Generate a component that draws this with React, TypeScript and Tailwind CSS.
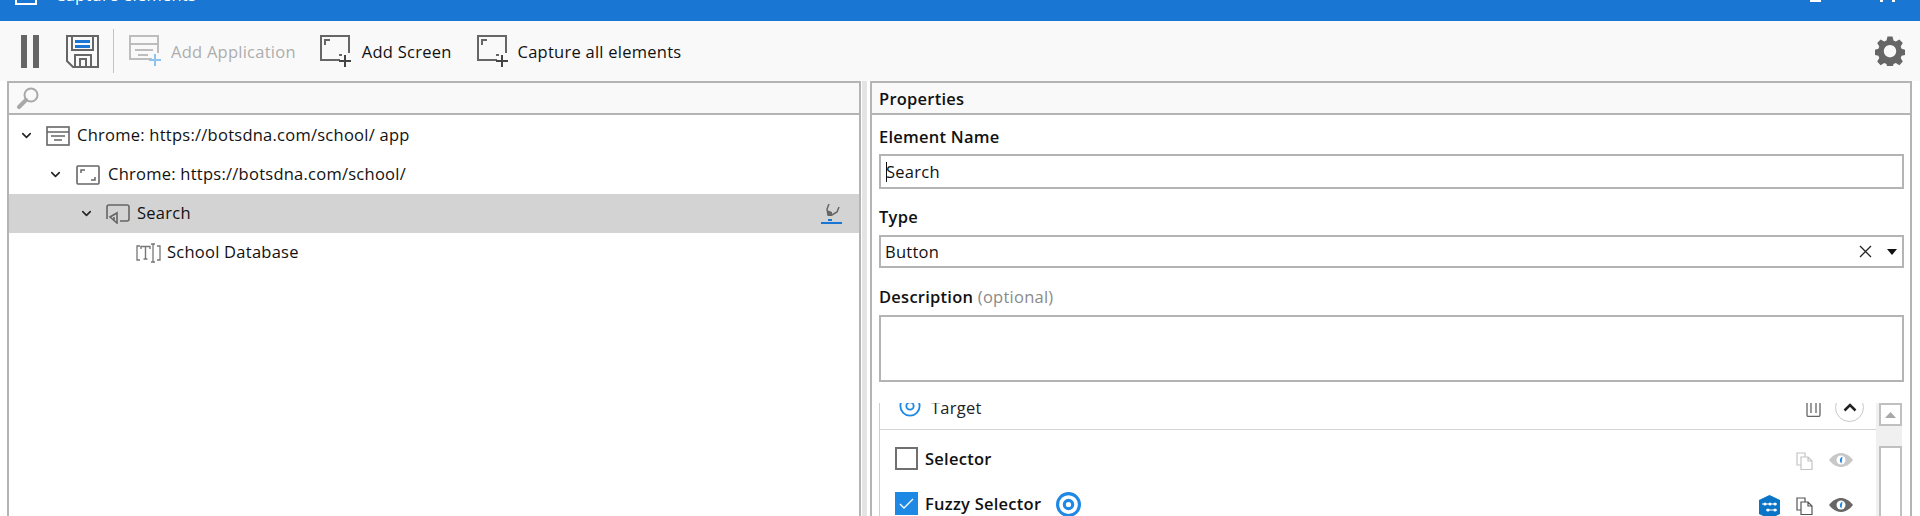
import { ChevronDown } from 'lucide-react'
import type { ReactNode } from 'react'

const font = "font-['Open_Sans','Noto_Sans',sans-serif] tracking-[0.25px]"

function PauseIcon() {
    return (
        <svg width="18" height="33" viewBox="0 0 18 33" className="ml-[21px] shrink-0">
            <rect x="0" y="0" width="6" height="33" fill="#666" />
            <rect x="12" y="0" width="6" height="33" fill="#666" />
        </svg>
    )
}

function SaveIcon() {
    return (
        <svg width="33" height="33" viewBox="0 0 33 33" className="ml-[27px] shrink-0" fill="none">
            <path d="M1 1h31v31H7l-6-6z" stroke="#666" strokeWidth="2" />
            <path d="M6 2v13h21V2" stroke="#666" strokeWidth="2" />
            <rect x="9" y="5" width="15" height="3" fill="#1976d2" />
            <rect x="9" y="10" width="15" height="3" fill="#1976d2" />
            <path d="M9 32V20h16v12M14 32v-8h6v8" stroke="#666" strokeWidth="2" />
        </svg>
    )
}

function AddAppIcon() {
    return (
        <svg width="32" height="33" viewBox="0 0 32 33" className="shrink-0" fill="none">
            <path d="M23 24H1V1h28v17" stroke="#bdbdbd" strokeWidth="2" />
            <path d="M1 9h28M6 15h18M9 20h10" stroke="#bdbdbd" strokeWidth="2" />
            <path d="M26 19v12M20 25h12" stroke="#90c2ef" strokeWidth="2" />
        </svg>
    )
}

function ScreenAddIcon() {
    return (
        <svg width="32" height="33" viewBox="0 0 32 33" className="shrink-0" fill="none">
            <path d="M20 25H1V1h28v17" stroke="#666" strokeWidth="2" />
            <path d="M5 10V5h5M19 20h3" stroke="#666" strokeWidth="2" />
            <path d="M25 20v12M19 26h12" stroke="#444" strokeWidth="2" />
        </svg>
    )
}

function GearIcon() {
    return (
        <svg width="30" height="30" viewBox="0 0 30 30" className="shrink-0">
            <path
                fill="#666"
                fillRule="evenodd"
                d="M12.5 0.5h5l1 4 2.3 1 3.6-2.1 3.4 3.6-2.1 3.5 0.9 2.3 4 1v5l-4 1-0.9 2.3 2.1 3.5-3.4 3.6-3.6-2.1-2.3 1-1 4h-5l-1-4-2.3-1-3.6 2.1-3.4-3.6 2.1-3.5-0.9-2.3-4-1v-5l4-1 0.9-2.3-2.1-3.5 3.4-3.6 3.6 2.1 2.3-1z M15 9a6.2 6.2 0 1 0 0.01 0z"
            />
        </svg>
    )
}

function SearchIcon() {
    return (
        <svg width="24" height="24" viewBox="0 0 24 24" fill="none" className="ml-[7px] shrink-0">
            <circle cx="15" cy="9" r="6.5" stroke="#a8a8a8" strokeWidth="2" />
            <path d="M10 14l-7 7" stroke="#a8a8a8" strokeWidth="4" strokeLinecap="round" />
        </svg>
    )
}

function AppNodeIcon() {
    return (
        <svg width="24" height="20" viewBox="0 0 24 20" fill="none" className="shrink-0">
            <rect x="1" y="1" width="22" height="18" stroke="#666" strokeWidth="1.6" />
            <path d="M1 6h22M5 10h14M8 14h8" stroke="#666" strokeWidth="1.5" />
        </svg>
    )
}

function ScreenNodeIcon() {
    return (
        <svg width="24" height="20" viewBox="0 0 24 20" fill="none" className="shrink-0">
            <rect x="1" y="1" width="22" height="18" rx="1" stroke="#666" strokeWidth="1.6" />
            <path d="M5 8V5h4M19 12v3h-4" stroke="#666" strokeWidth="1.5" />
        </svg>
    )
}

function ElementNodeIcon() {
    return (
        <svg width="24" height="20" viewBox="0 0 24 20" fill="none" className="shrink-0">
            <path d="M1 15V3a2 2 0 0 1 2-2h18a2 2 0 0 1 2 2v12a2 2 0 0 1-2 2h-7" stroke="#666" strokeWidth="1.6" />
            <path d="M11 9v10l-7-6z" stroke="#666" strokeWidth="1.6" />
            <path d="M8 13v3" stroke="#666" strokeWidth="1.6" />
        </svg>
    )
}

function TextNodeIcon() {
    return (
        <svg width="25" height="20" viewBox="0 0 25 20" fill="none" className="shrink-0">
            <path d="M4 3H1v14h3M21 3h3v14h-3" stroke="#777" strokeWidth="1.3" />
            <path d="M5 6V3.5h9V6M9.5 3.5V16M7.5 16h4" stroke="#777" strokeWidth="1.4" />
            <path d="M15 1h4M15 19h4M17 1v18" stroke="#777" strokeWidth="1.3" />
        </svg>
    )
}

function BrushIcon() {
    return (
        <svg width="21" height="20" viewBox="0 0 21 20" fill="none" className="shrink-0">
            <path d="M8 0L6 5l1 6h4l5-3 2-5" stroke="#666" strokeWidth="1.5" />
            <path d="M6 6l5 2 0 4H7z" fill="#666" />
            <rect x="7" y="15" width="4" height="2" fill="#1976d2" />
            <rect x="0" y="18" width="21" height="2" fill="#1976d2" />
        </svg>
    )
}

function TargetIcon({ size, stroke }: { size: number; stroke: number }) {
    return (
        <svg width={size} height={size} viewBox="0 0 24 24" fill="none" className="shrink-0">
            <circle cx="12" cy="12" r="10.5" stroke="#1e88e5" strokeWidth={stroke} />
            <circle cx="12" cy="12" r="4" stroke="#1e88e5" strokeWidth={stroke} />
        </svg>
    )
}

function CopyIcon({ color }: { color: string }) {
    return (
        <svg width="17" height="18" viewBox="0 0 17 18" fill="none" className="shrink-0">
            <path d="M5 13H1V1h8v4" stroke={color} strokeWidth="1.2" />
            <path d="M5 5h7l4 4v8.5H5zM12 5v4h4" stroke={color} strokeWidth="1.2" fill="none" />
        </svg>
    )
}

function EyeIcon({ color }: { color: string }) {
    return (
        <svg width="24" height="14" viewBox="0 0 24 14" className="shrink-0">
            <path d="M0 7C4 2 8 0 12 0s8 2 12 7c-4 5-8 7-12 7S4 12 0 7z" fill={color} />
            <circle cx="12" cy="7" r="4.5" fill="#fff" />
            <path d="M13.5 3.5a4 4 0 0 0-1 7z" fill="#1e88e5" />
        </svg>
    )
}

function HexIcon() {
    return (
        <svg width="21" height="24" viewBox="0 0 21 24" className="shrink-0">
            <path d="M10.5 0L21 5v14l-10.500 5L0 19V5z" fill="#0a74c6" />
            <path d="M3 9h15M7 15h11" stroke="#fff" strokeWidth="1.2" />
            <circle cx="6" cy="9" r="1.5" fill="#fff" />
            <circle cx="11" cy="9" r="1.5" fill="#fff" />
            <circle cx="16" cy="9" r="1.5" fill="#fff" />
            <circle cx="9" cy="15" r="1.5" fill="#fff" />
            <circle cx="16" cy="15" r="1.5" fill="#fff" />
        </svg>
    )
}

function TreeRow({ className, children }: { className: string; children: ReactNode }) {
    return <div className={`flex h-[39px] items-center text-[16.5px] text-[#111] ${className}`}>{children}</div>
}

function FieldLabel({ className, children }: { className: string; children: ReactNode }) {
    return <div className={`h-[23px] text-[16.5px] leading-[23px] font-semibold text-[#111] ${className}`}>{children}</div>
}

export default function App() {
    return (
        <div className={`h-[516px] w-[1920px] overflow-hidden bg-white ${font}`}>
            {/* title bar, cut off at the top of the capture */}
            <div className="flex h-[21px] items-start overflow-hidden bg-[#1976d2] text-white">
                <div className="-mt-[10px] ml-[15px] h-[15px] w-[22px] shrink-0 border-x-2 border-b-2 border-white" />
                <span className="-mt-[15px] ml-[18px] text-[16.5px] leading-[20px]">Capture elements</span>
                <div className="ml-auto h-[2px] w-[11px] bg-white" />
                <div className="mr-[25px] ml-[59px] flex h-[2px] w-[15px] justify-between">
                    <span className="h-[2px] w-[3px] bg-white" />
                    <span className="h-[2px] w-[3px] bg-white" />
                </div>
            </div>

            {/* toolbar */}
            <div className="flex h-[60px] items-center bg-[#f9f9f9]">
                <PauseIcon />
                <SaveIcon />
                <div className="ml-[14px] h-[44px] w-[1px] bg-[#c4c4c4]" />
                <div className="ml-[15px] flex items-center gap-[10px]">
                    <AddAppIcon />
                    <span className="mt-[2px] text-[16.5px] text-[#adadad]">Add Application</span>
                </div>
                <div className="ml-[24px] flex items-center gap-[10px]">
                    <ScreenAddIcon />
                    <span className="mt-[2px] text-[16.5px] text-[#111]">Add Screen</span>
                </div>
                <div className="ml-[25px] flex items-center gap-[9px]">
                    <ScreenAddIcon />
                    <span className="mt-[2px] text-[16.5px] text-[#111]">Capture all elements</span>
                </div>
                <div className="mr-[15px] ml-auto">
                    <GearIcon />
                </div>
            </div>

            <div className="flex h-[435px]">
                {/* element tree */}
                <div className="ml-[7px] h-full w-[854px] shrink-0 border-x-2 border-t-2 border-[#b4b4b4]">
                    <div className="flex h-[32px] items-center border-b-2 border-[#b4b4b4] bg-[#f9f9f9]">
                        <SearchIcon />
                    </div>
                    <div className="pt-[1px]">
                        <TreeRow className="pl-[10px]">
                            <ChevronDown size={15} strokeWidth={2.5} color="#222" className="shrink-0" />
                            <span className="ml-[12px]"><AppNodeIcon /></span>
                            <span className="ml-[7px]">Chrome: https://botsdna.com/school/ app</span>
                        </TreeRow>
                        <TreeRow className="pl-[39px]">
                            <ChevronDown size={15} strokeWidth={2.5} color="#222" className="shrink-0" />
                            <span className="ml-[13px]"><ScreenNodeIcon /></span>
                            <span className="ml-[8px]">Chrome: https://botsdna.com/school/</span>
                        </TreeRow>
                        <TreeRow className="bg-[#d3d3d3] pl-[70px]">
                            <ChevronDown size={15} strokeWidth={2.5} color="#222" className="shrink-0" />
                            <span className="ml-[12px]"><ElementNodeIcon /></span>
                            <span className="ml-[7px]">Search</span>
                            <div className="mr-[17px] ml-auto">
                                <BrushIcon />
                            </div>
                        </TreeRow>
                        <TreeRow className="pl-[127px]">
                            <TextNodeIcon />
                            <span className="ml-[6px]">School Database</span>
                        </TreeRow>
                    </div>
                </div>

                {/* splitter */}
                <div className="h-full w-[9px] shrink-0 bg-white">
                    <div className="ml-[1px] h-full w-[5px] bg-[#e4e4e4]" />
                </div>

                {/* properties */}
                <div className="h-full w-[1042px] shrink-0 border-x-2 border-t-2 border-[#b4b4b4]">
                    <div className="flex h-[32px] items-center border-b-2 border-[#b4b4b4] bg-[#f9f9f9] pt-[3px] pl-[7px] text-[16.5px] font-semibold text-[#111]">
                        Properties
                    </div>
                    <div className="px-[7px]">
                        <FieldLabel className="mt-[10px]">Element Name</FieldLabel>
                        <div className="mt-[6px] flex h-[35px] w-[1025px] items-center border-2 border-[#b4b4b4] pl-[5px] text-[16.5px] text-[#111]">
                            <span className="h-[20px] w-[1px] bg-[#111]" />
                            <span className="mt-[2px] -ml-[1px]">Search</span>
                        </div>
                        <FieldLabel className="mt-[16px]">Type</FieldLabel>
                        <div className="mt-[7px] flex h-[33px] w-[1025px] items-center border-2 border-[#b4b4b4] pl-[4px] text-[16.5px] text-[#111]">
                            <span className="mt-[2px]">Button</span>
                            <svg width="13" height="13" viewBox="0 0 13 13" className="mr-[15px] ml-auto" fill="none">
                                <path d="M1 1l11 11M12 1L1 12" stroke="#222" strokeWidth="1.3" />
                            </svg>
                            <svg width="10" height="6" viewBox="0 0 10 6" className="mr-[5px]">
                                <path d="M0 0h10L5 6z" fill="#111" />
                            </svg>
                        </div>
                        <FieldLabel className="mt-[17px]">
                            Description <span className="font-normal text-[#8a8a8a]">(optional)</span>
                        </FieldLabel>
                        <div className="mt-[7px] h-[67px] w-[1025px] border-2 border-[#b4b4b4]" />

                        {/* selector list, scrolled part way */}
                        <div className="mt-[21px] flex h-[113px] w-[1023px] overflow-hidden">
                            <div className="w-[997px] shrink-0 border-l border-[#d0d0d0]">
                                <div className="flex h-[27px] items-center overflow-hidden border-b border-[#d4d4d4] pr-[12px] pl-[19px]">
                                    <div className="-mt-[20px]">
                                        <TargetIcon size={22} stroke={2} />
                                    </div>
                                    <span className="-mt-[16px] ml-[10px] text-[16.5px] leading-[20px] text-[#222]">Target</span>
                                    <svg width="15" height="14" viewBox="0 0 15 14" fill="none" className="-mt-[12px] ml-auto">
                                        <path d="M1 0v12a1.5 1.5 0 0 0 1.5 1.5h10a1.5 1.5 0 0 0 1.5-1.5V0M5 0v10M10 0v10" stroke="#666" strokeWidth="1.3" />
                                    </svg>
                                    <div className="-mt-[18px] ml-[14px] flex h-[29px] w-[29px] shrink-0 items-center justify-center rounded-full border border-[#c8c8c8]">
                                        <svg width="14" height="9" viewBox="0 0 14 9" fill="none">
                                            <path d="M1.5 7.5L7 2l5.5 5.5" stroke="#222" strokeWidth="2.5" />
                                        </svg>
                                    </div>
                                </div>
                                <div className="flex h-[62px] items-start pt-[17px] pr-[23px] pl-[15px]">
                                    <div className="h-[23px] w-[23px] border-2 border-[#707070] bg-white" />
                                    <span className="ml-[7px] text-[16.5px] leading-[23px] font-semibold text-[#111]">Selector</span>
                                    <div className="mt-[5px] mr-[16px] ml-auto">
                                        <CopyIcon color="#c4c4c4" />
                                    </div>
                                    <div className="mt-[6px]">
                                        <EyeIcon color="#c8c8c8" />
                                    </div>
                                </div>
                                <div className="flex h-[24px] items-start pr-[23px] pl-[15px]">
                                    <div className="flex h-[23px] w-[23px] items-center justify-center bg-[#1e88e5]">
                                        <svg width="15" height="11" viewBox="0 0 15 11" fill="none">
                                            <path d="M1 6l4 4 9-9" stroke="#fff" strokeWidth="1.4" />
                                        </svg>
                                    </div>
                                    <span className="ml-[7px] text-[16.5px] leading-[23px] font-semibold text-[#111]">Fuzzy Selector</span>
                                    <div className="ml-[15px]">
                                        <TargetIcon size={25} stroke={3} />
                                    </div>
                                    <div className="mt-[3px] ml-auto">
                                        <HexIcon />
                                    </div>
                                    <div className="mx-[16px] mt-[5px]">
                                        <CopyIcon color="#555" />
                                    </div>
                                    <div className="mt-[6px]">
                                        <EyeIcon color="#666" />
                                    </div>
                                </div>
                            </div>
                            <div className="w-[26px] shrink-0 bg-[#f0f0f0] pl-[3px]">
                                <div className="flex h-[23px] w-[23px] items-center justify-center border-2 border-[#c0c0c0] bg-white">
                                    <svg width="11" height="6" viewBox="0 0 11 6">
                                        <path d="M5.5 0L11 6H0z" fill="#a8a8a8" />
                                    </svg>
                                </div>
                                <div className="mt-[20px] h-[80px] w-[23px] border-2 border-[#c0c0c0] bg-white" />
                            </div>
                        </div>
                    </div>
                </div>
            </div>
        </div>
    )
}
